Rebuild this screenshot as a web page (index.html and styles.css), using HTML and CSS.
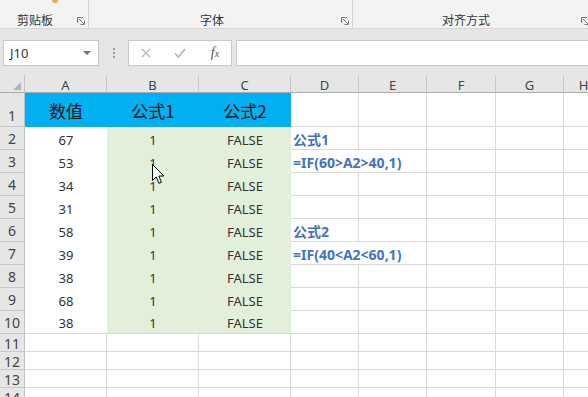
FILE: index.html
```
<!DOCTYPE html>
<html lang="zh-CN">
<head>
    <meta charset="UTF-8">
    <title>公式对比</title>
    <link rel="stylesheet" href="styles.css">
</head>
<body>
<div class="app">
    <div class="ribbon">
        <div class="group g_clip">
            <span class="paste_tip"></span>
            <span class="label">剪贴板</span>
            <svg class="launcher" width="8" height="8" viewBox="0 0 8 8"><path d="M0.5 6V0.5H6M2 2L7 7M3.5 7.5H7.5V3.5" fill="none" stroke="#7a7a7a" stroke-width="1"/></svg>
        </div>
        <div class="group g_font">
            <span class="label">字体</span>
            <svg class="launcher" width="8" height="8" viewBox="0 0 8 8"><path d="M0.5 6V0.5H6M2 2L7 7M3.5 7.5H7.5V3.5" fill="none" stroke="#7a7a7a" stroke-width="1"/></svg>
        </div>
        <div class="group g_align">
            <span class="label">对齐方式</span>
            <svg class="launcher" width="8" height="8" viewBox="0 0 8 8"><path d="M0.5 6V0.5H6M2 2L7 7M3.5 7.5H7.5V3.5" fill="none" stroke="#7a7a7a" stroke-width="1"/></svg>
        </div>
    </div>

    <div class="fbar">
        <div class="namebox"><span>J10</span><i class="caret"></i></div>
        <div class="grip"><i></i><i></i><i></i></div>
        <div class="fbtns">
            <span class="fbtn"><svg width="10" height="10" viewBox="0 0 10 10"><path d="M1 1L9 9M9 1L1 9" stroke="#b3b3b3" stroke-width="1.2"/></svg></span>
            <span class="fbtn"><svg width="12" height="10" viewBox="0 0 12 10"><path d="M1 5.5L4.5 9L11 1" fill="none" stroke="#b3b3b3" stroke-width="1.6"/></svg></span>
            <span class="fbtn fx">f<sub>x</sub></span>
        </div>
        <div class="finput"></div>
    </div>

    <div class="sheet_wrap">
        <div class="sheet">
            <div class="corner"><i></i></div><div class="ch">A</div><div class="ch">B</div><div class="ch">C</div><div class="ch">D</div><div class="ch">E</div><div class="ch">F</div><div class="ch">G</div><div class="ch">H</div>

            <div class="rh">1</div><div class="hd">数值</div><div class="hd">公式1</div><div class="hd">公式2</div><div class="c"></div><div class="c"></div><div class="c"></div><div class="c"></div><div class="c"></div>

            <div class="rh">2</div><div class="w">67</div><div class="g">1</div><div class="g">FALSE</div><div class="c note">公式1</div><div class="c"></div><div class="c"></div><div class="c"></div><div class="c"></div>
            <div class="rh">3</div><div class="w">53</div><div class="g">1</div><div class="g">FALSE</div><div class="c note span2">=IF(60&gt;A2&gt;40,1)</div><div class="c"></div><div class="c"></div><div class="c"></div>
            <div class="rh">4</div><div class="w">34</div><div class="g">1</div><div class="g">FALSE</div><div class="c"></div><div class="c"></div><div class="c"></div><div class="c"></div><div class="c"></div>
            <div class="rh">5</div><div class="w">31</div><div class="g">1</div><div class="g">FALSE</div><div class="c"></div><div class="c"></div><div class="c"></div><div class="c"></div><div class="c"></div>
            <div class="rh">6</div><div class="w">58</div><div class="g">1</div><div class="g">FALSE</div><div class="c note">公式2</div><div class="c"></div><div class="c"></div><div class="c"></div><div class="c"></div>
            <div class="rh">7</div><div class="w">39</div><div class="g">1</div><div class="g">FALSE</div><div class="c note span2">=IF(40&lt;A2&lt;60,1)</div><div class="c"></div><div class="c"></div><div class="c"></div>
            <div class="rh">8</div><div class="w">38</div><div class="g">1</div><div class="g">FALSE</div><div class="c"></div><div class="c"></div><div class="c"></div><div class="c"></div><div class="c"></div>
            <div class="rh">9</div><div class="w">68</div><div class="g">1</div><div class="g">FALSE</div><div class="c"></div><div class="c"></div><div class="c"></div><div class="c"></div><div class="c"></div>
            <div class="rh">10</div><div class="w last">38</div><div class="g last">1</div><div class="g last">FALSE</div><div class="c"></div><div class="c"></div><div class="c"></div><div class="c"></div><div class="c"></div>

            <div class="rh sm">11</div><div class="c"></div><div class="c"></div><div class="c"></div><div class="c"></div><div class="c"></div><div class="c"></div><div class="c"></div><div class="c"></div>
            <div class="rh sm">12</div><div class="c"></div><div class="c"></div><div class="c"></div><div class="c"></div><div class="c"></div><div class="c"></div><div class="c"></div><div class="c"></div>
            <div class="rh sm">13</div><div class="c"></div><div class="c"></div><div class="c"></div><div class="c"></div><div class="c"></div><div class="c"></div><div class="c"></div><div class="c"></div>
            <div class="rh sm">14</div><div class="c"></div><div class="c"></div><div class="c"></div><div class="c"></div><div class="c"></div><div class="c"></div><div class="c"></div><div class="c"></div>
        </div>
        <svg class="cursor" width="13" height="21" viewBox="0 0 13 21"><path d="M0.5 0.5V16.5L4.3 12.9L6.9 19.3L9.4 18.3L6.8 12H11.8Z" fill="#fff" stroke="#000" stroke-width="1" stroke-linejoin="miter"/></svg>
    </div>
</div>
</body>
</html>
```

FILE: styles.css
```
*{margin:0; padding:0; box-sizing:border-box;}
body{width:588px; height:397px; overflow:hidden; background:#fff; font-family:"Noto Sans","Noto Sans CJK SC",sans-serif; color:#222;}
.app{width:588px; height:397px; overflow:hidden;}

/* ============ ribbon ============ */
.ribbon{display:flex; height:29px; background:#f3f3f3; border-bottom:1px solid #d6d6d6; overflow:hidden;}
.ribbon .group{position:relative; display:flex; align-items:flex-end; flex-shrink:0; height:28px; border-right:1px solid #d2d2d2; padding-bottom:0;}
.ribbon .label{font-family:"Noto Sans CJK SC",sans-serif; font-size:12px; line-height:16px; color:#333;}
.ribbon .launcher{margin-left:auto; margin-right:3px; margin-bottom:3px;}
.g_clip{width:89px; padding-left:17px;}
.g_font{width:264px; padding-left:111px;}
.g_align{width:240px; padding-left:89px; border-right:0 none;}
.paste_tip{position:absolute; top:0; left:52px; width:6px; height:3px; background:#f0a850; border-radius:0 0 3px 3px;}

/* ============ formula bar ============ */
.fbar{display:flex; align-items:flex-start; height:46px; padding:11px 0 0 3px; background:#e6e6e6;}
.namebox{display:flex; align-items:center; width:96px; height:26px; padding:0 7px 0 6px; background:#fff; border:1px solid #c9c9c9; font-size:13px; color:#333;}
.namebox .caret{margin-left:auto; width:0; height:0; border-left:4px solid transparent; border-right:4px solid transparent; border-top:4px solid #707070;}
.grip{display:flex; flex-direction:column; align-items:center; justify-content:center; gap:2px; width:29px; height:26px;}
.grip i{display:block; width:2px; height:2px; background:#9c9c9c;}
.fbtns{display:flex; width:104px; height:26px; background:#fff; border:1px solid #c9c9c9;}
.fbtn{display:flex; align-items:center; justify-content:center; width:34px; height:24px;}
.fbtn.fx{font-family:"Liberation Serif",serif; font-style:italic; font-size:14px; color:#555; padding-left:2px;}
.fbtn.fx sub{font-size:10px; vertical-align:-1px;}
.finput{flex:1; height:26px; margin-left:4px; background:#fff; border:1px solid #c9c9c9; border-right:0 none;}

/* ============ sheet ============ */
.sheet_wrap{position:relative;}
.sheet{display:grid; grid-template-columns:25px 82px 92px 92px 68px 68px 69px 68px 40px; grid-template-rows:18px 34px repeat(9,23px) repeat(4,18px); font-size:13px;}
.sheet > div{display:flex; align-items:center; justify-content:center; white-space:nowrap;}

.corner{background:#e6e6e6; border-right:1px solid #c4c4c4; border-bottom:1px solid #ababab;}
.corner i{width:0; height:0; margin:5px 3px 0 auto; border-left:8px solid transparent; border-bottom:8px solid #b4b4b4;}
.ch{background:#e6e6e6; border-right:1px solid #c8c8c8; border-bottom:1px solid #ababab; color:#444; padding-top:2px; font-size:13px;}
.rh{background:#e6e6e6; border-right:1px solid #c0c0c0; border-bottom:1px solid #c8c8c8; color:#444; font-size:14px; line-height:16px;}
.sheet > .rh{align-items:flex-end; padding-bottom:2px;}
.sheet > .rh.sm{padding-bottom:0; line-height:15px;}

.c{border-right:1px solid #d9d9d9; border-bottom:1px solid #d9d9d9;}
.hd{background:#00b0f0; font-family:"Noto Sans CJK SC",sans-serif; font-size:17px; color:#111;}
.w{background:#fff; padding-top:2px; color:#333;}
.g{background:#e2efda; padding-top:2px; color:#333;}
.last{border-bottom:1px solid #d9d9d9;}
.sheet > .note{justify-content:flex-start; padding:2px 0 0 2px; color:#4472c4; font-size:14px; font-weight:bold; font-family:"Noto Sans","Noto Sans CJK SC",sans-serif;}
.span2{grid-column:span 2;}

.cursor{position:absolute; left:152px; top:89px;}
```
